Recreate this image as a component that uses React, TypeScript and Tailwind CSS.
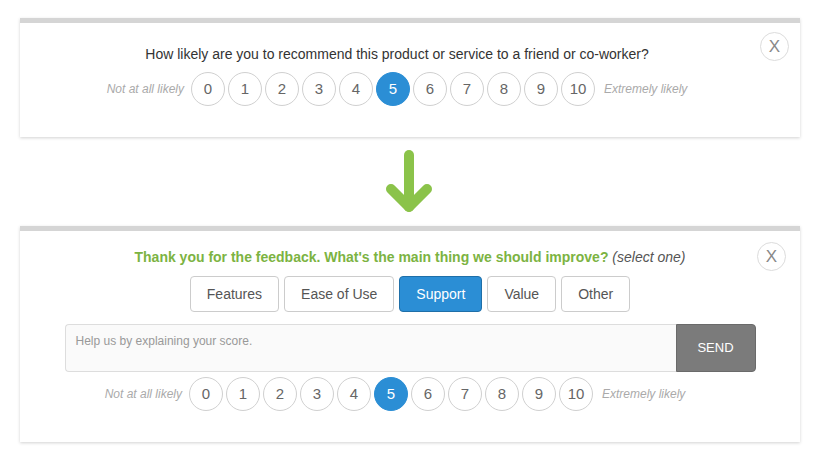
import React from 'react';

const FONT = "font-['Liberation_Sans',Arial,sans-serif]";

const CloseButton: React.FC<{ className: string }> = ({ className }) => (
  <button
    className={`absolute ${className} w-[29px] h-[29px] rounded-full border border-[#dcdcdc] bg-white text-[#888] text-[17px] leading-none flex items-center justify-center`}
  >
    X
  </button>
);

const Scale: React.FC<{ selected: number; className?: string }> = ({ selected, className = '' }) => (
  <div className={`flex items-center justify-center ${className}`}>
    <span className="text-[12px] italic text-[#aaa] mr-[7px]">Not at all likely</span>
    <div className="flex gap-[3px]">
      {Array.from({ length: 11 }, (_, i) => (
        <div
          key={i}
          className={`w-[34px] h-[34px] rounded-full flex items-center justify-center text-[15px] ${
            i === selected
              ? 'bg-[#2b8ed5] border border-[#2b8ed5] text-white'
              : 'border border-[#d0d0d0] text-[#666] bg-white'
          }`}
        >
          {i}
        </div>
      ))}
    </div>
    <span className="text-[12px] italic text-[#aaa] ml-[9px]">Extremely likely</span>
  </div>
);

const options = ['Features', 'Ease of Use', 'Support', 'Value', 'Other'];

export default function App() {
  return (
    <div className={`w-[816px] h-[469px] bg-white pt-[18px] ${FONT}`}>
      {/* first step */}
      <div className="relative mx-[20px] w-[780px] h-[119px] bg-white border-t-[5px] border-[#d5d5d5] shadow-[0_1px_3px_rgba(0,0,0,0.18)]">
        <CloseButton className="right-[11px] top-[9px]" />
        <div className="pt-[21px] pr-[26px]">
          <p className="text-center text-[14px] leading-[20px] text-[#333]">
            How likely are you to recommend this product or service to a friend or co-worker?
          </p>
          <Scale selected={5} className="mt-[8px]" />
        </div>
      </div>

      {/* arrow */}
      <div className="h-[89px] flex items-center justify-center">
        <svg width="48" height="66" viewBox="0 0 48 66" className="ml-[2px]">
          <g fill="none" stroke="#8bc34a" strokeWidth="10" strokeLinecap="round" strokeLinejoin="round">
            <line x1="24" y1="6" x2="24" y2="58" />
            <polyline points="6,40 24,58 42,40" />
          </g>
        </svg>
      </div>

      {/* second step */}
      <div className="relative mx-[20px] w-[780px] h-[216px] bg-white border-t-[5px] border-[#d5d5d5] shadow-[0_1px_3px_rgba(0,0,0,0.18)]">
        <CloseButton className="right-[14px] top-[11px]" />
        <div className="pt-[16px]">
          <p className="text-center text-[14px] leading-[20px]">
            <span className="font-bold text-[#7cb342]">
              Thank you for the feedback. What's the main thing we should improve?
            </span>{' '}
            <span className="italic text-[#555]">(select one)</span>
          </p>
          <div className="mt-[9px] flex justify-center gap-[5px]">
            {options.map((o) => (
              <button
                key={o}
                className={`h-[36px] px-[16px] rounded-[4px] border text-[14px] ${
                  o === 'Support'
                    ? 'bg-[#2b8ed5] border-[#1f6fa8] text-white'
                    : 'bg-white border-[#ccc] text-[#555]'
                }`}
              >
                {o}
              </button>
            ))}
          </div>
          <div className="mt-[12px] flex justify-center">
            <div className="w-[611px] h-[48px] bg-[#fafafa] border border-[#ddd] border-r-0 rounded-l-[4px] px-[10px] pt-[7px] text-[12px] text-[#999]">
              Help us by explaining your score.
            </div>
            <button className="w-[80px] h-[48px] bg-[#7b7b7b] border border-[#6a6a6a] rounded-r-[4px] text-white text-[13px]">
              SEND
            </button>
          </div>
          <Scale selected={5} className="mt-[5px] pr-[30px]" />
        </div>
      </div>
    </div>
  );
}
